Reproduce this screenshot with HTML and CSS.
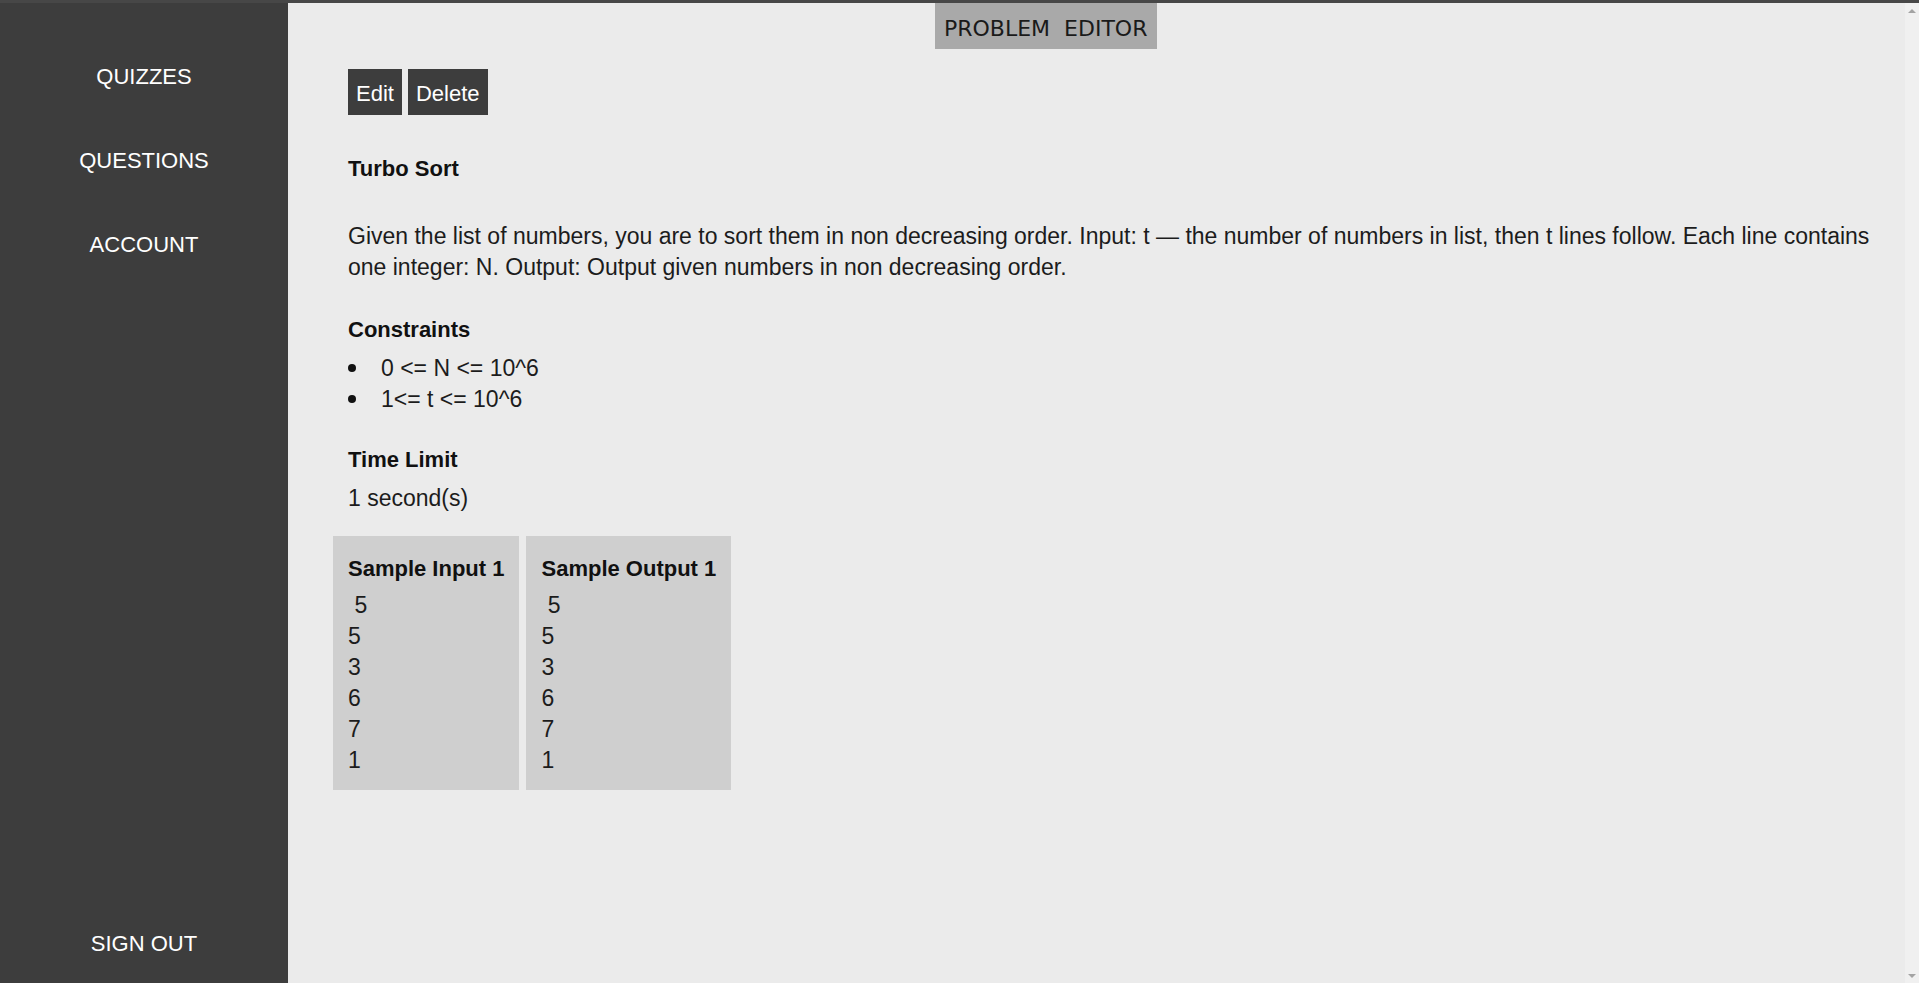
FILE: index.html
```html
<!DOCTYPE html>
<html lang="en">
<head>
<meta charset="utf-8">
<title>Problem Editor</title>
<link rel="stylesheet" href="styles.css">
</head>
<body>
<div class="app">
  <nav class="sidebar">
    <a class="nav-item" href="#">QUIZZES</a>
    <a class="nav-item" href="#">QUESTIONS</a>
    <a class="nav-item" href="#">ACCOUNT</a>
    <a class="nav-item signout" href="#">SIGN OUT</a>
  </nav>
  <main class="main">
    <header class="header">
      <div class="title">PROBLEM&nbsp; EDITOR</div>
    </header>
    <div class="content">
      <div class="actions">
        <button class="btn">Edit</button>
        <button class="btn">Delete</button>
      </div>
      <div class="heading problem-name">Turbo Sort</div>
      <p class="statement">Given the list of numbers, you are to sort them in non decreasing order. Input: t — the number of numbers in list, then t lines follow. Each line contains one integer: N. Output: Output given numbers in non decreasing order.</p>
      <div class="heading section">Constraints</div>
      <ul class="constraints">
        <li>0 &lt;= N &lt;= 10^6</li>
        <li>1&lt;= t &lt;= 10^6</li>
      </ul>
      <div class="heading section">Time Limit</div>
      <div class="value">1 second(s)</div>
      <div class="samples">
        <div class="sample">
          <div class="heading sample-title">Sample Input 1</div>
          <div class="sample-data"> 5
5
3
6
7
1</div>
        </div>
        <div class="sample">
          <div class="heading sample-title">Sample Output 1</div>
          <div class="sample-data"> 5
5
3
6
7
1</div>
        </div>
      </div>
    </div>
  </main>
  <div class="scrollbar">
    <span class="arrow up"></span>
    <span class="arrow down"></span>
  </div>
</div>
</body>
</html>
```
FILE: styles.css
```css
* { box-sizing: border-box; }

html, body {
  margin: 0;
  padding: 0;
  height: 100%;
}

body {
  border-top: 3px solid #474747;
  background: #ebebeb;
  font-family: "Liberation Sans", Arial, sans-serif;
  font-size: 22px;
  line-height: 31px;
  color: #1c1c1c;
  overflow: hidden;
}

.app {
  display: flex;
  height: 980px;
}

.sidebar {
  width: 288px;
  flex: 0 0 288px;
  background: #3d3d3d;
  display: flex;
  flex-direction: column;
  align-items: center;
  padding: 58px 0 24px;
  gap: 53px;
}

.nav-item {
  color: #ffffff;
  text-decoration: none;
  line-height: 31px;
}

.signout {
  margin-top: auto;
}

.main {
  flex: 1;
  display: flex;
  flex-direction: column;
  min-width: 0;
}

.header {
  display: flex;
  padding-left: 647px;
}

.title {
  background: #a9a9a9;
  font-family: "DejaVu Sans", Verdana, sans-serif;
  font-size: 22px;
  line-height: 26px;
  padding: 13px 10px 7px 9px;
  color: #1a1a1a;
  white-space: nowrap;
}

.content {
  padding: 0 10px 0 60px;
}

.actions {
  margin-top: 20px;
  display: flex;
  gap: 6px;
}

.btn {
  font-family: inherit;
  font-size: 22px;
  line-height: 31px;
  color: #ffffff;
  background: #3d3d3d;
  border: none;
  border-radius: 0;
  padding: 9px 8px 6px;
  margin: 0;
}

.heading {
  font-weight: bold;
  color: #111111;
}

.problem-name {
  margin-top: 38px;
}

.statement,
.constraints,
.value,
.sample-data {
  font-size: 23px;
}

.statement {
  margin: 37px 0 0;
}

.section {
  margin-top: 31px;
}

.constraints {
  margin: 8px 0 0;
  padding: 0;
  list-style: none;
}

.constraints li {
  display: flex;
  align-items: center;
}

.constraints li::before {
  content: "";
  width: 8px;
  height: 8px;
  border-radius: 50%;
  background: #111111;
  margin: -1px 25px 0 0;
  flex: 0 0 8px;
}

.constraints + .section {
  margin-top: 29px;
}

.value {
  margin-top: 8px;
}

.samples {
  margin: 22px 0 0 -15px;
  display: flex;
  gap: 7px;
  align-items: flex-start;
}

.sample {
  background: #cfcfcf;
  padding: 17px 15px 14px;
}

.sample-data {
  margin-top: 6px;
  white-space: pre;
}

.scrollbar {
  flex: 0 0 14px;
  background: #f0f0f0;
  display: flex;
  flex-direction: column;
  justify-content: space-between;
  align-items: center;
  padding: 6px 0 5px;
}

.arrow {
  width: 0;
  height: 0;
  border-left: 4px solid transparent;
  border-right: 4px solid transparent;
}

.arrow.up {
  border-bottom: 4px solid #a3a3a3;
}

.arrow.down {
  border-top: 4px solid #a3a3a3;
}
```
